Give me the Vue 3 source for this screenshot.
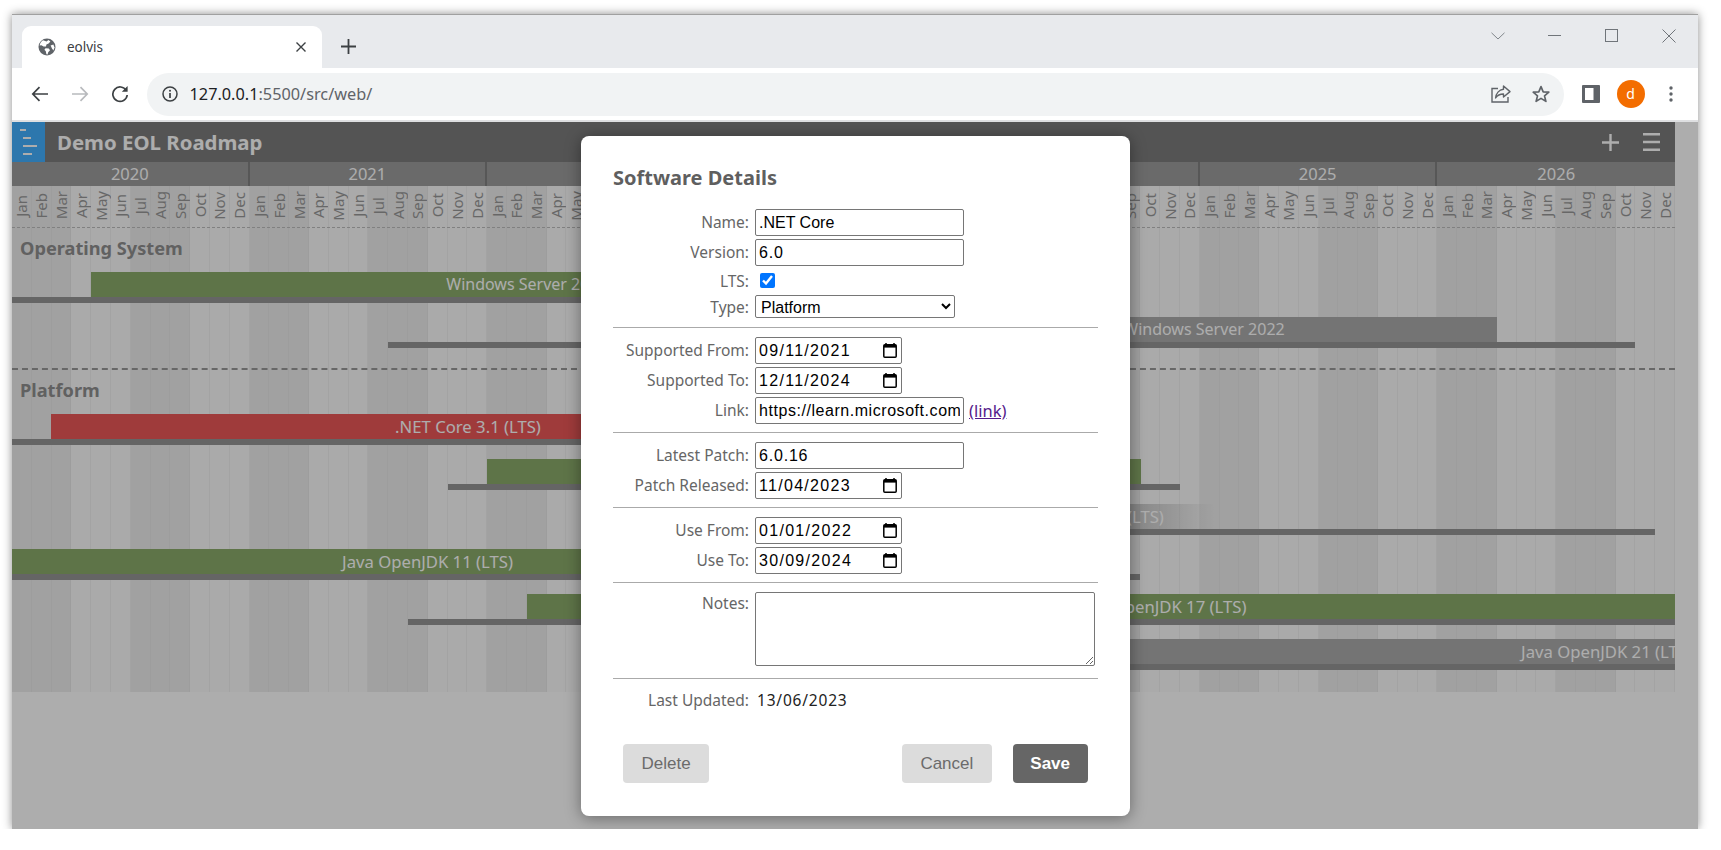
<template>
  <div class="window">
    <div class="titlebar">
      <div class="tab">
        <svg class="globe" viewBox="0 0 18 18" width="18" height="18">
          <circle cx="9" cy="9" r="8.5" fill="#5f6368" />
          <path d="M5 2.2 8.6 3.4 10.4 2 12.4 3.6 10.6 5.6 8.4 6.4 8 8.4 5.6 8.6 3.4 7.2 1.6 7.6C1.9 5.2 3.2 3.3 5 2.2Z" fill="#fff" />
          <path d="M7.6 10.2 10.8 10.4 12 12.2 10.2 14.2 9.6 16.4 8.4 16.2 7.8 13.2 6.4 11.8Z" fill="#fff" />
          <path d="M12.6 7.4 15.4 6.6 16.5 9.4 15.4 12.4 14 10.4Z" fill="#fff" />
        </svg>
        <span class="tab-title">eolvis</span>
        <svg class="tab-close" viewBox="0 0 10 10" width="10" height="10">
          <path d="M.5.5 9.5 9.5M9.5.5.5 9.5" stroke="#3c4043" stroke-width="1.4" fill="none" />
        </svg>
      </div>
      <svg class="new-tab" viewBox="0 0 15 15" width="15" height="15">
        <path d="M7.5 0V15M0 7.5H15" stroke="#3c4043" stroke-width="1.8" fill="none" />
      </svg>
      <div class="win-controls">
        <svg class="win-chevron" viewBox="0 0 14 8" width="14" height="8"><path d="M.5.8 7 7 13.5.8" stroke="#80868b" fill="none" /></svg>
        <svg class="win-min" viewBox="0 0 13 1" width="13" height="1"><path d="M0 .5H13" stroke="#70757a" /></svg>
        <svg class="win-max" viewBox="0 0 13 13" width="13" height="13"><rect x=".5" y=".5" width="12" height="12" stroke="#70757a" fill="none" /></svg>
        <svg class="win-close" viewBox="0 0 14 14" width="14" height="14"><path d="M.5.5 13.5 13.5M13.5.5.5 13.5" stroke="#70757a" fill="none" /></svg>
      </div>
    </div>

    <div class="toolbar">
      <svg class="nav-back" viewBox="0 0 18 16" width="18" height="16">
        <path d="M17 8H2M8.5 1.2 1.8 8 8.5 14.8" stroke="#3c4043" stroke-width="1.7" fill="none" />
      </svg>
      <svg class="nav-forward" viewBox="0 0 18 16" width="18" height="16">
        <path d="M1 8H16M9.5 1.2 16.2 8 9.5 14.8" stroke="#b8babd" stroke-width="1.7" fill="none" />
      </svg>
      <svg class="nav-reload" viewBox="0 0 18 18" width="18" height="18">
        <path d="M15.3 5.6A7.2 7.2 0 1 0 16.2 10" stroke="#3c4043" stroke-width="1.7" fill="none" />
        <path d="M16.6 1V6.8H10.8Z" fill="#3c4043" />
      </svg>
      <div class="omnibox">
        <svg class="info" viewBox="0 0 16 16" width="16" height="16">
          <circle cx="8" cy="8" r="7" stroke="#3c4043" stroke-width="1.5" fill="none" />
          <path d="M8 7V12" stroke="#3c4043" stroke-width="1.7" />
          <circle cx="8" cy="4.8" r="1" fill="#3c4043" />
        </svg>
        <span class="url"><span class="url-host">127.0.0.1</span>:5500/src/web/</span>
        <svg class="share" viewBox="0 0 20 18" width="20" height="18">
          <path d="M7 3.5H1V17H17V12" stroke="#5f6368" stroke-width="1.4" fill="none" />
          <path d="M12.5 1 19 6.6 12.5 12V9C9 9 6.5 10 4.6 13 5 8.6 8 4.8 12.5 4.2Z" stroke="#5f6368" stroke-width="1.4" fill="none" stroke-linejoin="round" />
        </svg>
        <svg class="star" viewBox="0 0 18 18" width="18" height="18">
          <path d="M9 1.6 11.2 6.8 16.8 7.2 12.5 10.9 13.9 16.4 9 13.4 4.1 16.4 5.5 10.9 1.2 7.2 6.8 6.8Z" stroke="#5f6368" stroke-width="1.7" fill="none" stroke-linejoin="round" />
        </svg>
      </div>
      <svg class="side-panel" viewBox="0 0 18 18" width="18" height="18">
        <rect width="18" height="18" rx="1" fill="#5f6368" />
        <rect x="3" y="3" width="8.5" height="12" fill="#fff" />
      </svg>
      <div class="avatar">d</div>
      <svg class="menu-dots" viewBox="0 0 4 16" width="4" height="16">
        <circle cx="2" cy="2" r="1.7" fill="#5f6368" />
        <circle cx="2" cy="8" r="1.7" fill="#5f6368" />
        <circle cx="2" cy="14" r="1.7" fill="#5f6368" />
      </svg>
    </div>

    <div class="page">
      <div class="app">
        <header class="app-header">
          <div class="app-logo">
            <svg viewBox="0 0 20 28" width="20" height="28">
              <path d="M1 2H7M4 10H12M4 18H18M4 26H13" stroke="#fff" stroke-width="2.2" fill="none" />
            </svg>
          </div>
          <h1 class="app-title">Demo EOL Roadmap</h1>
          <svg class="app-add" viewBox="0 0 17 17" width="17" height="17">
            <path d="M8.5 0V17M0 8.5H17" stroke="#fff" stroke-width="2.4" fill="none" />
          </svg>
          <svg class="app-menu" viewBox="0 0 17 18" width="17" height="18">
            <path d="M0 1.2H17M0 9H17M0 16.8H17" stroke="#fff" stroke-width="2.4" fill="none" />
          </svg>
        </header>

        <div class="years">
          <div v-for="y in years" :key="y" class="year">{{ y }}</div>
        </div>

        <div class="timeline">
          <div class="stripes">
            <div
              v-for="(m, i) in allMonths"
              :key="i"
              class="stripe"
              :class="{ dark: Math.floor(i / 3) % 2 === 0 }"
            ></div>
          </div>

          <div class="months">
            <div v-for="(m, i) in allMonths" :key="i" class="month"><span>{{ m }}</span></div>
          </div>

          <section v-for="s in sections" :key="s.title" class="section">
            <h2 class="section-title">{{ s.title }}</h2>
            <div v-for="(r, i) in s.rows" :key="i" class="row">
              <div class="bar" :class="[r.kind, { tight: r.tight }]" :style="{ left: r.from + 'px', width: r.to - r.from + 'px' }">
                {{ r.label }}
              </div>
              <div class="support" :style="{ left: r.supFrom + 'px', width: r.supTo - r.supFrom + 'px' }"></div>
            </div>
          </section>
        </div>
      </div>

      <div class="overlay">
        <div class="dialog">
          <h3 class="dialog-title">Software Details</h3>

          <div class="group">
            <div class="field">
              <label>Name:</label>
              <input class="text-input" type="text" value=".NET Core" />
            </div>
            <div class="field">
              <label>Version:</label>
              <input class="text-input spaced" type="text" value="6.0" />
            </div>
            <div class="field short">
              <label>LTS:</label>
              <input class="check" type="checkbox" checked />
            </div>
            <div class="field short">
              <label>Type:</label>
              <select class="select">
                <option>Platform</option>
                <option>Operating System</option>
              </select>
            </div>
          </div>
          <hr class="first" />

          <div class="group">
            <div class="field">
              <label>Supported From:</label>
              <div class="date"><input type="text" value="09/11/2021" /><CalendarIcon /></div>
            </div>
            <div class="field">
              <label>Supported To:</label>
              <div class="date"><input type="text" value="12/11/2024" /><CalendarIcon /></div>
            </div>
            <div class="field">
              <label>Link:</label>
              <input class="text-input url-input" type="text" value="https://learn.microsoft.com/" />
              <a class="link" href="#">(link)</a>
            </div>
          </div>
          <hr />

          <div class="group">
            <div class="field">
              <label>Latest Patch:</label>
              <input class="text-input spaced" type="text" value="6.0.16" />
            </div>
            <div class="field">
              <label>Patch Released:</label>
              <div class="date"><input type="text" value="11/04/2023" /><CalendarIcon /></div>
            </div>
          </div>
          <hr />

          <div class="group">
            <div class="field">
              <label>Use From:</label>
              <div class="date"><input type="text" value="01/01/2022" /><CalendarIcon /></div>
            </div>
            <div class="field">
              <label>Use To:</label>
              <div class="date"><input type="text" value="30/09/2024" /><CalendarIcon /></div>
            </div>
          </div>
          <hr />

          <div class="field notes">
            <label>Notes:</label>
            <textarea class="textarea"></textarea>
          </div>
          <hr class="last" />

          <div class="field updated">
            <label>Last Updated:</label>
            <span class="updated-value">13/06/2023</span>
          </div>

          <div class="actions">
            <button class="btn delete" type="button">Delete</button>
            <button class="btn cancel" type="button">Cancel</button>
            <button class="btn primary" type="button">Save</button>
          </div>
        </div>
      </div>
    </div>
  </div>
</template>

<script setup>
import { h } from 'vue';

// small date-picker glyph
const CalendarIcon = () =>
  h('svg', { class: 'cal', viewBox: '0 0 14 15', width: 14, height: 15, style: 'flex:none;margin-left:auto;margin-right:4px' }, [
    h('path', { d: 'M3 0V2M11 0V2', stroke: '#000', 'stroke-width': 1.5 }),
    h('rect', { x: 0.8, y: 1.8, width: 12.4, height: 12.4, rx: 1, stroke: '#000', 'stroke-width': 1.5, fill: 'none' }),
    h('rect', { x: 1, y: 2, width: 12, height: 2.6, fill: '#000' })
  ]);

const years = [2020, 2021, 2022, 2023, 2024, 2025, 2026];
const names = ['Jan', 'Feb', 'Mar', 'Apr', 'May', 'Jun', 'Jul', 'Aug', 'Sep', 'Oct', 'Nov', 'Dec'];
const allMonths = years.flatMap(() => names);

// positions are pixels from the left edge of the chart
const sections = [
  {
    title: 'Operating System',
    rows: [
      { label: 'Windows Server 2019', kind: 'green', tight: true, from: 79, to: 951, supFrom: 0, supTo: 1000 },
      { label: 'Windows Server 2022', kind: 'grey', tight: true, from: 899, to: 1485, supFrom: 376, supTo: 1623 }
    ]
  },
  {
    title: 'Platform',
    rows: [
      { label: '.NET Core 3.1 (LTS)', kind: 'red', from: 39, to: 873, supFrom: 0, supTo: 960 },
      { label: '.NET Core 6.0 (LTS)', kind: 'green', from: 475, to: 1129, supFrom: 436, supTo: 1168 },
      { label: '.NET Core 8.0 (LTS)', kind: 'fade', from: 954, to: 1204, supFrom: 900, supTo: 1643 },
      { label: 'Java OpenJDK 11 (LTS)', kind: 'green', from: 0, to: 831, supFrom: 0, supTo: 1128 },
      { label: 'Java OpenJDK 17 (LTS)', kind: 'green', from: 515, to: 1783, supFrom: 396, supTo: 1783 },
      { label: 'Java OpenJDK 21 (LTS)', kind: 'grey', from: 1000, to: 2189, supFrom: 1000, supTo: 2189 }
    ]
  }
];
</script>

<style>
html, body {
  margin: 0;
  background: #fff;
  overflow: hidden;
}
</style>

<style scoped>
.window {
  width: 1686px;
  height: 815px;
  margin: 14px 0 0 12px;
  display: flex;
  flex-direction: column;
  box-shadow: 0 0 9px rgba(0, 0, 0, 0.45);
  font-family: "Noto Sans", sans-serif;
}

/* browser chrome */
.titlebar {
  height: 54px;
  flex: none;
  display: flex;
  align-items: flex-end;
  background: #e8eaed;
  box-sizing: border-box;
  border-top: 1px solid #a0a0a0;
  padding-left: 10px;
}
.tab {
  width: 300px;
  height: 42px;
  box-sizing: border-box;
  display: flex;
  align-items: center;
  padding: 0 16px;
  background: #fff;
  border-radius: 9px 9px 0 0;
}
.globe { flex: none; margin-left: 0; }
.tab-title {
  margin-left: 11px;
  font-size: 13.5px;
  color: #3c4043;
}
.tab-close { margin-left: auto; margin-right: 0; }
.new-tab { margin: 0 0 14px 19px; }
.win-controls {
  margin-left: auto;
  align-self: stretch;
  display: flex;
  align-items: center;
  padding-bottom: 12px;
  padding-right: 22px;
}
.win-chevron { margin-right: 43px; }
.win-min { margin-right: 44px; }
.win-max { margin-right: 44px; }

.toolbar {
  height: 54px;
  flex: none;
  box-sizing: border-box;
  display: flex;
  align-items: center;
  background: #fff;
  border-bottom: 2px solid #dedfe1;
  padding: 0 0 0 19px;
}
.nav-forward { margin-left: 22px; }
.nav-reload { margin-left: 21.5px; }
.omnibox {
  width: 1417px;
  height: 43px;
  margin-left: 18px;
  box-sizing: border-box;
  display: flex;
  align-items: center;
  padding: 0 14px 0 15px;
  background: #f1f3f4;
  border-radius: 22px;
}
.url {
  margin-left: 12px;
  font-size: 16.3px;
  color: #5f6368;
}
.url-host { color: #202124; }
.share { margin-left: auto; }
.star { margin-left: 21px; }
.side-panel { margin-left: 18px; }
.avatar {
  width: 28px;
  height: 28px;
  margin-left: 17px;
  border-radius: 50%;
  background: #f36d00;
  color: #fff;
  font-size: 14px;
  line-height: 28px;
  text-align: center;
}
.menu-dots { margin-left: 24px; }

/* page */
.page {
  flex: 1;
  position: relative;
  background: #fff;
  overflow: hidden;
}
.app {
  width: 1663px;
  font-family: "Noto Sans", sans-serif;
}
.app-header {
  height: 40px;
  display: flex;
  align-items: center;
  background: #7d7d7d;
  color: #fff;
}
.app-logo {
  width: 33px;
  height: 40px;
  box-sizing: border-box;
  padding: 6px 0 0 7px;
  background: #43b0ff;
}
.app-title {
  margin: 0 0 0 12px;
  font-size: 20.4px;
  font-weight: 700;
}
.app-add { margin-left: auto; }
.app-menu { margin: 0 15px 0 24px; }

.years {
  height: 24px;
  display: grid;
  grid-template-columns: repeat(7, 1fr);
  background: #9d9d9d;
}
.year {
  border-right: 2px solid #808080;
  text-align: center;
  font-size: 16.5px;
  line-height: 24px;
  color: #fff;
}
.year:last-child { border-right: 0; }

.timeline {
  position: relative;
  overflow: hidden;
}
.stripes {
  position: absolute;
  inset: 0;
  display: grid;
  grid-template-columns: repeat(84, 1fr);
}
.stripe {
  background: #fbfbfb;
  border-right: 1px solid #f0f0f0;
}
.stripe.dark {
  background: #eeeeee;
  border-right-color: #e7e7e7;
}
.months {
  position: relative;
  height: 41px;
  display: grid;
  grid-template-columns: repeat(84, 1fr);
  border-bottom: 1px dashed #bdbdbd;
}
.month {
  display: flex;
  align-items: center;
  justify-content: center;
  padding-bottom: 2px;
  overflow: hidden;
}
.month span {
  writing-mode: vertical-rl;
  transform: rotate(180deg);
  font-size: 15px;
  line-height: 1;
  color: #999;
}

.section {
  position: relative;
  padding-bottom: 6px;
  border-bottom: 2px dashed #999;
}
.section:last-child {
  padding-bottom: 8px;
  border-bottom: 0;
}
.section-title {
  height: 44px;
  margin: 0;
  padding-left: 8px;
  font-size: 18.2px;
  font-weight: 700;
  line-height: 41px;
  color: #8f8f8f;
}
.row {
  position: relative;
  height: 45px;
}
.bar {
  position: absolute;
  top: 0;
  height: 25px;
  text-align: center;
  font-size: 16.7px;
  line-height: 25px;
  white-space: nowrap;
  overflow: hidden;
  color: #fff;
}
.bar.tight { font-size: 16px; }
.bar.green { background: #8bac6b; }
.bar.red { background: #eb5858; }
.bar.grey { background: #acacac; }
.bar.fade { background: linear-gradient(to right, #acacac 50%, transparent); }
.support {
  position: absolute;
  top: 25px;
  height: 6px;
  background: #969696;
}

/* dialog */
.overlay {
  position: absolute;
  inset: 0;
  display: flex;
  justify-content: center;
  align-items: flex-start;
  background: rgba(0, 0, 0, 0.32);
}
.dialog {
  width: 549px;
  height: 680px;
  margin-top: 14px;
  box-sizing: border-box;
  padding: 14px 32px 0 32.5px;
  background: #fff;
  border-radius: 8px;
  box-shadow: 0 2px 16px rgba(0, 0, 0, 0.4);
}
.dialog-title {
  height: 59px;
  margin: 0;
  font-size: 20px;
  font-weight: 700;
  line-height: 56px;
  color: #5f5f5f;
}
.group {
  display: flex;
  flex-direction: column;
  gap: 3px;
}
.field {
  display: flex;
  align-items: center;
  min-height: 27px;
}
.field.short { min-height: 23px; }
.field label {
  width: 136px;
  flex: none;
  margin: 0 6px 2px 0;
  text-align: right;
  font-size: 15.5px;
  color: #666;
}
.field.short label { margin-bottom: 0; }
hr {
  height: 1px;
  margin: 8px 0 9px;
  border: 0;
  background: #aaa;
}
hr.first { margin: 9px 0 9px; }
hr.last { margin: 12px 0 8px; }
.text-input {
  width: 209px;
  height: 27px;
  box-sizing: border-box;
  padding: 1px 3px 0;
  border: 1px solid #767676;
  border-radius: 2px;
  background: #fff;
  font: 16px "Liberation Sans", sans-serif;
  color: #000;
}
.text-input.spaced { letter-spacing: 0.8px; }
.text-input.url-input { letter-spacing: 0.55px; }
.check {
  width: 15px;
  height: 15px;
  margin: 0 0 0 5px;
  accent-color: #0075ff;
}
.select {
  width: 200px;
  height: 23px;
  box-sizing: border-box;
  padding: 1px 0 0 1px;
  border: 1px solid #767676;
  border-radius: 2px;
  background: #fff;
  font: 16px "Liberation Sans", sans-serif;
  color: #000;
}
.date {
  width: 147px;
  height: 27px;
  box-sizing: border-box;
  display: flex;
  align-items: center;
  border: 1px solid #767676;
  border-radius: 2px;
  background: #fff;
}
.date input {
  width: 112px;
  height: 100%;
  box-sizing: border-box;
  padding: 1px 0 0 3px;
  border: 0;
  outline: 0;
  background: transparent;
  font: 16px "Liberation Sans", sans-serif;
  letter-spacing: 1.3px;
  color: #000;
}
.link {
  margin-left: 5px;
  font-size: 16.5px;
  color: #551a8b;
}
.field.notes { align-items: flex-start; }
.textarea {
  width: 340px;
  height: 74px;
  box-sizing: border-box;
  margin: 0;
  border: 1px solid #767676;
  border-radius: 2px;
  background: #fff;
  display: block;
}
.updated-value {
  margin: 0 0 2px 2px;
  font-size: 15.5px;
  letter-spacing: 0.8px;
  color: #222;
}
.actions {
  display: flex;
  margin-top: 30px;
  padding: 0 10px;
}
.btn {
  height: 39px;
  padding: 0 18px;
  border: 0;
  border-radius: 4px;
  background: #dcdcdc;
  font: 17px "Liberation Sans", sans-serif;
  color: #6b6b6b;
}
.btn.delete { padding: 0 18.5px; }
.btn.cancel { margin-left: auto; padding: 0 18.5px; }
.btn.primary {
  margin-left: 21px;
  padding: 0 17.5px;
  background: #666;
  color: #fff;
  font-weight: 700;
}
</style>
